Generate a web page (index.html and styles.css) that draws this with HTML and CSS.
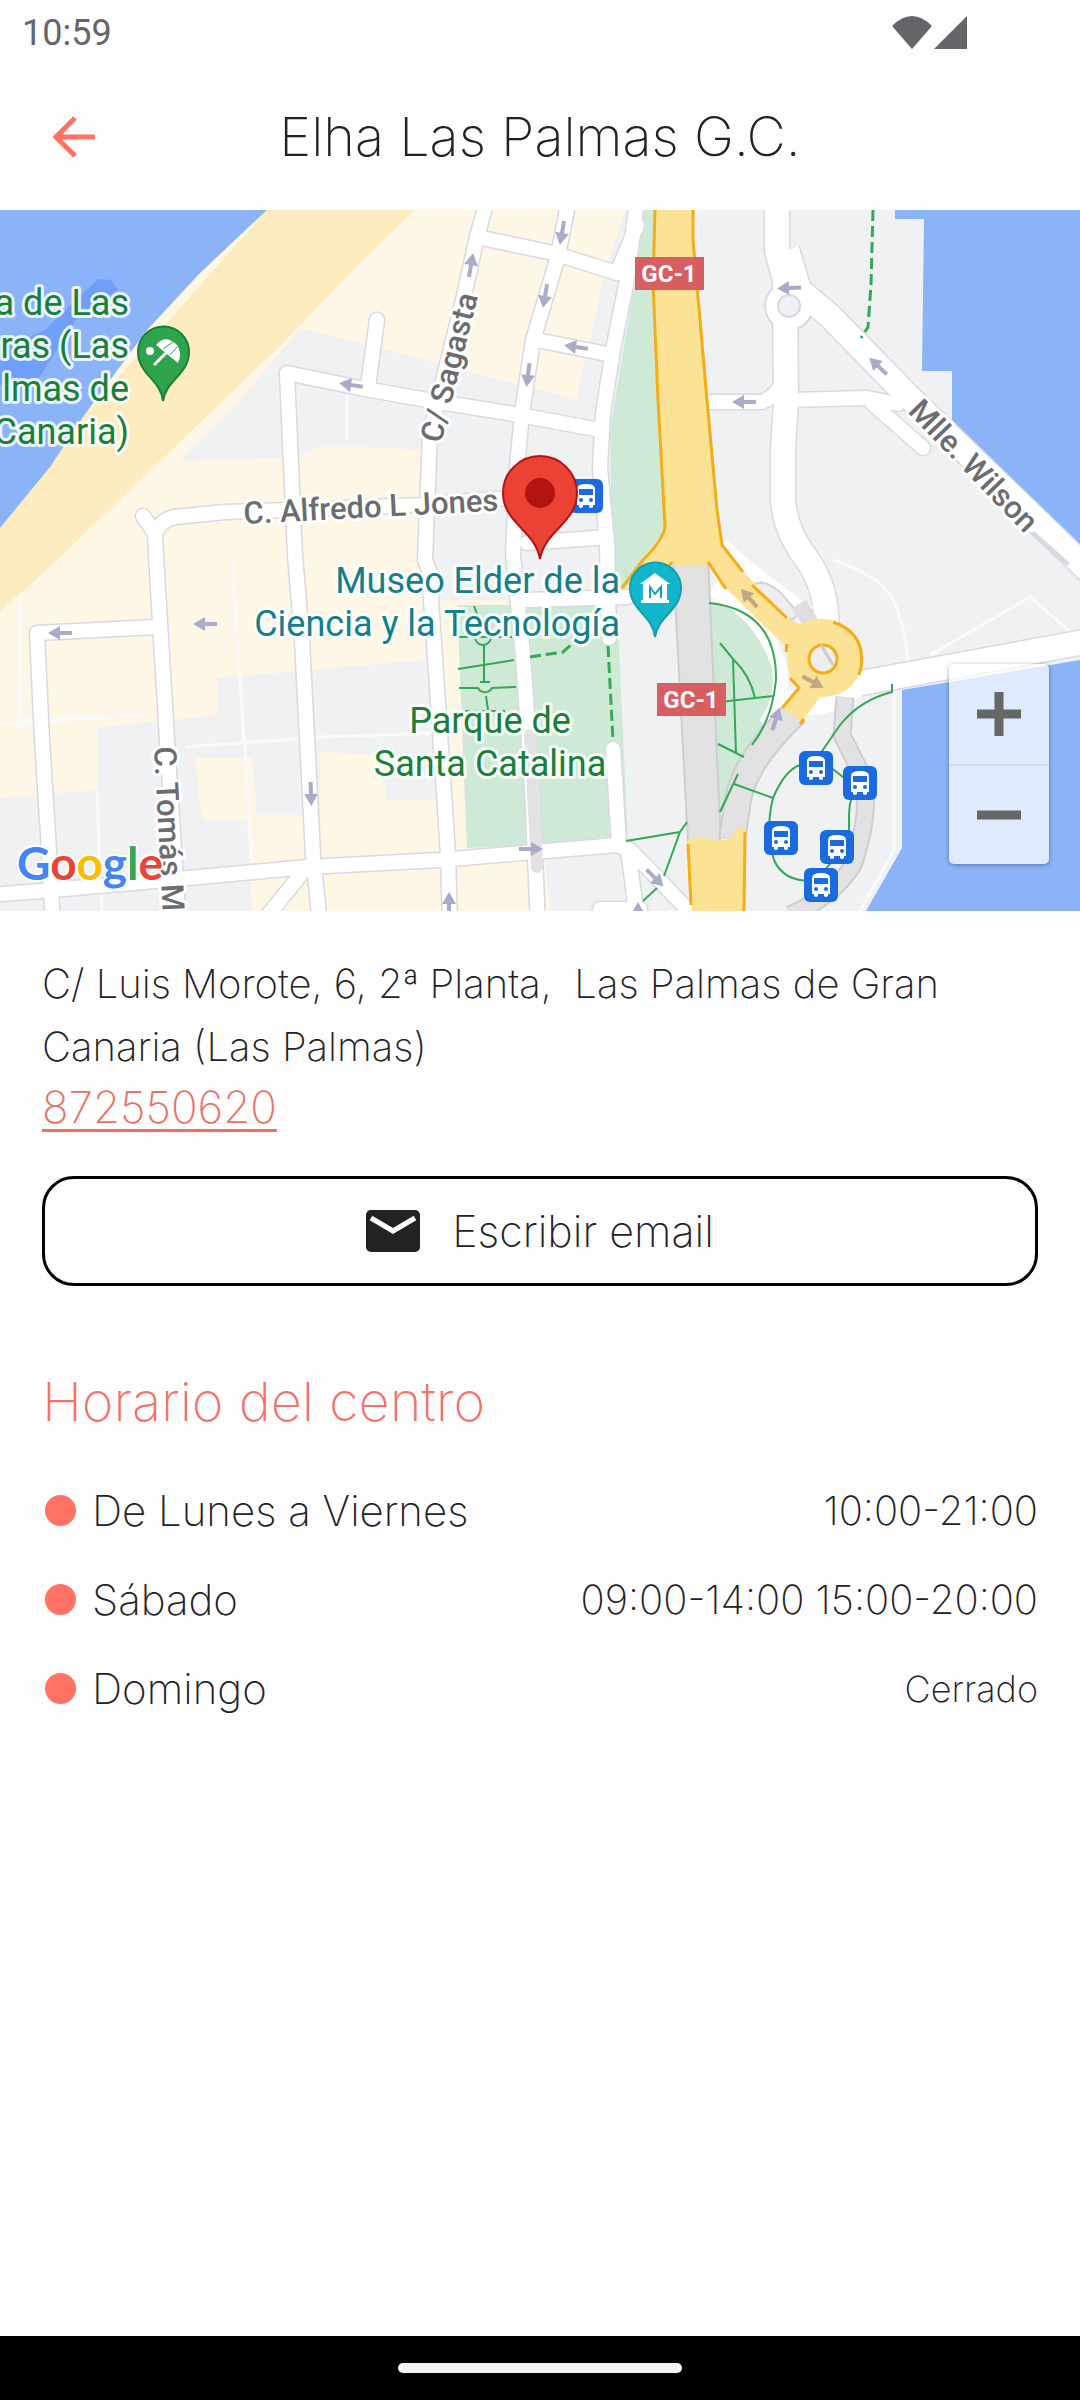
FILE: index.html
```html
<!DOCTYPE html>
<html lang="es">
<head>
<meta charset="utf-8">
<meta name="viewport" content="width=device-width, initial-scale=1">
<title>Elha Las Palmas G.C.</title>
<link rel="stylesheet" href="styles.css">
</head>
<body>
<div class="screen">
  <div class="status">
    <span class="clock">10:59</span>
    <svg class="signals" width="78" height="36" viewBox="0 0 78 36" aria-hidden="true">
      <path d="M0 11Q20 -9 40 11L20 34Z"/>
      <path d="M75 1V34H42Z"/>
    </svg>
  </div>
  <header class="header">
    <button class="back" type="button" aria-label="Volver">
      <svg width="44" height="44" viewBox="0 0 44 44" aria-hidden="true"><path d="M43 22H4M23 3L4 22L23 41"/></svg>
    </button>
    <h1 class="title">Elha Las Palmas G.C.</h1>
  </header>

  <section class="map" aria-label="Mapa">
    <svg class="map-canvas" viewBox="0 210 1080 701">
      <defs>
        <g id="arrow"><path d="M-12 0H4" fill="none" stroke="#a9acc9" stroke-width="4"/><path d="M0 -7L12 0L0 7Z" fill="#a9acc9"/></g>
        <g id="bus">
          <rect x="-17" y="-17" width="34" height="34" rx="6" fill="#1a6ae0"/>
          <path d="M-9 9V-7Q-9 -12 0 -12T9 -7V9H7V11Q5 13 3 11V9H-3V11Q-5 13 -7 11V9Z" fill="#fff"/>
          <path d="M-7 -7H7V-1H-7Z" fill="#1a6ae0"/>
          <circle cx="-5" cy="4" r="2" fill="#1a6ae0"/><circle cx="5" cy="4" r="2" fill="#1a6ae0"/>
        </g>
        <g id="roads" fill="none" stroke-linejoin="round" stroke-linecap="round">
          <path d="M143 516L154 532M155 533Q162 519 175 517L225 512L290 510L420 505L520 497"/>
          <path d="M155 530L156 555L160 622L167 740L178 911"/>
          <path d="M155 627L37 633L42 740L49 850L53 925"/>
          <path d="M320 925L313 855L302 640L295 555L287 373L360 388L427 400L520 415L600 430"/>
          <path d="M377 320L368 387"/>
          <path d="M487 200L477 237L463 300L430 433L425 560L429 570L438 702L448 855L450 925"/>
          <path d="M569 200L557 260L533 340L522 413L517 467L513 555L523 655L532 788L538 925"/>
          <path d="M477 237L553 253L617 273L637 225M537 340L612 355M527 543L607 537M527 600L627 597"/>
          <path d="M637 200L627 280L613 350L603 413L600 467L607 545L609 638"/>
          <path d="M613 749L619 843"/>
          <path d="M-10 895L53 890L200 877L307 867L440 860L617 845L630 850L667 888L697 920M628 850L638 925M307 867L260 925M600 909H640"/>
          <path d="M700 402H762Q775 397 785 380M790 400L867 398L898 404M872 403L923 448"/>
        </g>
        <g id="wide-roads" fill="none" stroke-linejoin="round">
          <path d="M777 200V250L785 280L786 400L783 450V500Q785 530 806 558Q830 590 826 640"/>
          <path d="M787 250L799 290L830 316L907 395L1095 577"/>
          <path d="M845 686L1095 640"/>
        </g>
      </defs>

      <rect y="210" width="1080" height="701" fill="#fef7e6"/>
      <path fill="#f0f1f3" d="M300 328L437 363L513 383L576 400L590 340L603 280L625 210H1080V911H620L550 911L545 860L610 840L600 600L425 600L440 800L385 800V755L320 752V815H257L252 758H195L202 820H247L252 911H0V798L97 790V728L217 715V678L425 660V450L360 447L320 447L293 458L180 461L240 400Z"/>
      <path fill="#fef7e6" d="M488 232L545 248L515 383L450 366ZM425 450H360V652L372 648V560H425Z"/>
      <path fill="#fef7e6" d="M449 868L525 862L530 911H451ZM450 805H460L466 848H452Z"/>
      <g class="lanes"><path d="M20 555V720L100 715M97 790L102 911M0 725L150 715M232 555L252 860M186 747L320 737L435 733M347 380V440"/></g>
      <path fill="#fdecc0" d="M267 210H415L360 263L283 343L133 487L57 560L0 612V528L83 417Z"/>
      <path fill="#8bb3f8" d="M0 210H267L200 273L147 330L83 417L50 467L0 528Z"/>
      <path fill="#6f9ff6" d="M98 279L111 280L118 290L75 320L40 377L0 385V350L45 330Z"/>
      <path fill="#8bb3f8" d="M895 210V219H924L922 371H952V420L1080 553V210Z"/>
      <path fill="#8bb3f8" d="M1080 660L902 690V848L866 911H1080Z"/>
      <path fill="#ceead6" d="M643 210H655L653 283L665 530L640 562L620 600L612 560L610 430L620 370L632 300Z"/>
      <path fill="#ceead6" d="M457 605H617L628 842L467 848Z"/>
      <path fill="#ceead6" d="M708 603Q777 610 776 678Q775 720 740 765L720 812Z"/>
      <g class="lanes"><path d="M833 560Q880 575 893 600Q905 625 908 662M930 655L1030 597L1080 640M894 690V850L860 911"/></g>

      <use href="#roads" stroke="#d9d9e0" stroke-width="17"/>
      <use href="#wide-roads" stroke="#d9d9e0" stroke-width="27"/>
      <circle cx="789" cy="306" r="25" fill="#d9d9e0"/>
      <use href="#roads" stroke="#fff" stroke-width="14"/>
      <use href="#wide-roads" stroke="#fff" stroke-width="24"/>
      <circle cx="789" cy="306" r="23" fill="#fff"/>
      <circle cx="789" cy="306" r="11" fill="#f0f1f3" stroke="#d9d9e0" stroke-width="2"/>
      <path fill="#d9d9e0" d="M1030 534L1034 531L1070 563L1066 566Z"/>

      <!-- motorway, tunnel and ramps -->
      <path d="M720 546Q750 575 808 615" fill="none" stroke="#fff" stroke-width="18"/>
      <path d="M712 590Q760 610 779 665Q785 700 765 725" fill="none" stroke="#fff" stroke-width="15"/>
      <path d="M785 700Q820 715 865 680" fill="none" stroke="#fff" stroke-width="22"/>
      <path d="M752 586Q762 577 780 592L798 613Q790 628 775 610Z" fill="#eeeef0" stroke="#d4d4d8" stroke-width="2"/>
      <path d="M799 604L815 630" stroke="#dededf" stroke-width="16"/>
      <path fill="#e2e2e2" stroke="#cecece" stroke-width="2" d="M673 560H708L720 822V842H688Z"/>
      <g fill="none" stroke-linejoin="round">
        <path d="M796 712Q745 760 738 800L732 840" stroke="#cecece" stroke-width="28"/>
        <path d="M796 712Q745 760 738 800L732 840" stroke="#e2e2e2" stroke-width="24"/>
        <path d="M845 697L842 735L862 775Q872 810 853 865Q835 895 790 915" stroke="#cecece" stroke-width="19"/>
        <path d="M845 697L842 735L862 775Q872 810 853 865Q835 895 790 915" stroke="#e2e2e2" stroke-width="15"/>
        <path d="M530 735L537 867" stroke="#e2e2e2" stroke-width="12" stroke-linecap="round"/>
      </g>
      <path fill="#fce294" d="M655 210H693V240L707 400L717 510L722 545L740 568L787 618L800 625Q815 615 835 621Q866 633 861 668Q853 697 820 697L802 722L782 708L798 688Q785 672 787 648L758 620L726 588L708 565H672L640 575L625 590L643 560L662 541L665 527L658 400L653 283Z"/>
      <path fill="#fce294" d="M688 840Q700 835 712 840H730Q740 820 746 832L744 911H692Z"/>
      <g fill="none" stroke="#f5ad17" stroke-width="3">
        <path d="M655 210L653 283L658 400L665 527Q663 540 643 560L622 588M693 210V240L707 400L717 510L722 545L743 572M672 562L652 590M752 585L787 618M708 562L726 589M833 622Q866 633 861 668L859 675M787 644L786 652M790 678L799 688L782 708M804 719L800 724M688 844L691 905M745 832L744 911"/>
        <circle cx="823" cy="659" r="14" fill="#eee"/>
      </g>
      <path d="M821 645L833 665" stroke="#ccc" stroke-width="3"/>

      <g fill="none" stroke="#34a853" stroke-width="2">
        <path d="M474 606L480 622M459 637H512M475 637A8 8 0 0 0 491 637M484 645V682M458 669L514 660M480 682H490M459 688H478A8 8 0 0 0 492 688L516 687M486 696L488 710M465 711H505"/>
        <path d="M709 603Q777 610 776 680Q772 720 752 745M720 643L733 659Q750 675 755 698M733 659L736 754M720 702L774 696M718 744L744 757M738 774L720 812M734 784L773 798M773 798Q785 770 800 765L816 760L840 725Q860 700 892 692V684M773 798Q765 830 774 860Q785 885 821 880M830 767L860 790Q850 790 849 815V840L821 875"/>
        <path d="M626 841L680 832M687 822L680 832L664 876M657 888L643 901"/>
      </g>
      <g fill="none" stroke="#34a853" stroke-width="3" stroke-dasharray="11 5">
        <path d="M873 210L871 285L868 327L861 338"/>
        <path d="M608 646L613 741M530 657L563 652L575 641"/>
      </g>

      <use href="#arrow" transform="translate(562 233) rotate(100)"/>
      <use href="#arrow" transform="translate(471 265) rotate(-80)"/>
      <use href="#arrow" transform="translate(545 296) rotate(100)"/>
      <use href="#arrow" transform="translate(528 375) rotate(97)"/>
      <use href="#arrow" transform="translate(576 347) rotate(188)"/>
      <use href="#arrow" transform="translate(351 385) rotate(188)"/>
      <use href="#arrow" transform="translate(789 288) rotate(178)"/>
      <use href="#arrow" transform="translate(878 366) rotate(-137)"/>
      <use href="#arrow" transform="translate(744 402) rotate(180)"/>
      <use href="#arrow" transform="translate(60 633) rotate(180)"/>
      <use href="#arrow" transform="translate(205 624) rotate(180)"/>
      <use href="#arrow" transform="translate(311 794) rotate(88)"/>
      <use href="#arrow" transform="translate(449 904) rotate(-90)"/>
      <use href="#arrow" transform="translate(531 849)"/>
      <use href="#arrow" transform="translate(655 878) rotate(45)"/>
      <use href="#arrow" transform="translate(638 914) rotate(-90)"/>
      <use href="#arrow" transform="translate(776 719) rotate(-72)"/>
      <g class="dark-arrows">
        <use href="#arrow" transform="translate(749 598) rotate(-132)"/>
        <use href="#arrow" transform="translate(813 682) rotate(28)"/>
      </g>

      <use href="#bus" x="586" y="496"/>
      <use href="#bus" x="816" y="768"/>
      <use href="#bus" x="860" y="783"/>
      <use href="#bus" x="781" y="838"/>
      <use href="#bus" x="837" y="847"/>
      <use href="#bus" x="821" y="885"/>

      <g class="shield">
        <rect x="635" y="257" width="69" height="33"/><text x="669" y="282">GC-1</text>
        <rect x="657" y="683" width="69" height="33"/><text x="691" y="708">GC-1</text>
      </g>

      <g class="street">
        <text transform="translate(244 524) rotate(-3)">C. Alfredo L Jones</text>
        <text transform="translate(441 444) rotate(-76)">C/ Sagasta</text>
        <text transform="translate(907 412) rotate(46)">Mlle. Wilson</text>
        <text transform="translate(154 747) rotate(87)">C. Tomás M</text>
      </g>
      <g class="place park end">
        <text x="129" y="315">a de Las</text>
        <text x="129" y="358">ras (Las</text>
        <text x="129" y="401">lmas de</text>
        <text x="129" y="444">Canaria)</text>
      </g>
      <g class="place museum end">
        <text x="620" y="593">Museo Elder de la</text>
        <text x="620" y="636">Ciencia y la Tecnología</text>
      </g>
      <g class="place park middle">
        <text x="490" y="733">Parque de</text>
        <text x="490" y="776">Santa Catalina</text>
      </g>

      <g>
        <path d="M163 401C161 380 138 374 138 352A25 25 0 0 1 189 352C189 374 166 380 163 401Z" fill="#2fa44f" stroke="#188038" stroke-width="2"/>
        <circle cx="150" cy="351" r="4" fill="#fff"/>
        <path d="M154 365L170 349" stroke="#fff" stroke-width="3"/>
        <path d="M156 345Q165 334 176 344Q183 352 178 363Z" fill="#fff"/>
        <path d="M163 349L173 342M170 355L177 347" stroke="#2fa44f" stroke-width="1"/>
      </g>
      <g>
        <path d="M655 637C653 616 630 610 630 588A25 25 0 0 1 681 588C681 610 658 616 655 637Z" fill="#12b5cb" stroke="#129eaf" stroke-width="2"/>
        <path d="M641 603V600H643V584H640L655 573L670 584H667V600H669V603Z" fill="#fff"/>
        <path d="M650 598V587L655 594L661 587V598" fill="none" stroke="#12a5b8" stroke-width="2"/>
      </g>
      <path d="M540 559C535 530 503 523 503 493A37 37 0 0 1 577 493C577 523 545 530 540 559Z" fill="#ea4335" stroke="#b31412" stroke-width="2"/>
      <circle cx="540" cy="493" r="15" fill="#b31412"/>

      <text class="logo" x="17" y="880"><tspan fill="#4285f4">G</tspan><tspan fill="#ea4335">o</tspan><tspan fill="#fbbc04">o</tspan><tspan fill="#4285f4">g</tspan><tspan fill="#34a853">l</tspan><tspan fill="#ea4335">e</tspan></text>
    </svg>
    <div class="zoom">
      <button type="button" aria-label="Acercar"><svg width="44" height="44" viewBox="0 0 44 44" aria-hidden="true"><path d="M0 22H44M22 0V44"/></svg></button>
      <button type="button" aria-label="Alejar"><svg width="44" height="44" viewBox="0 0 44 44" aria-hidden="true"><path d="M0 22H44"/></svg></button>
    </div>
  </section>

  <main class="content">
    <p class="address">C/ Luis Morote, 6, 2ª Planta,&nbsp; Las Palmas de Gran Canaria (Las Palmas)</p>
    <a class="phone" href="tel:872550620">872550620</a>
    <button class="email" type="button">
      <svg width="54" height="42" viewBox="0 0 54 42" aria-hidden="true"><rect width="54" height="42" rx="5" fill="#222124"/><path d="M5 8L27 21L49 8" fill="none" stroke="#fff" stroke-width="5"/></svg>
      <span>Escribir email</span>
    </button>
    <h2 class="subtitle">Horario del centro</h2>
    <table class="hours">
      <tr><th scope="row"><span class="day">De Lunes a Viernes</span></th><td class="time">10:00-21:00</td></tr>
      <tr><th scope="row"><span class="day">Sábado</span></th><td class="time">09:00-14:00 15:00-20:00</td></tr>
      <tr><th scope="row"><span class="day">Domingo</span></th><td>Cerrado</td></tr>
    </table>
  </main>
  <div class="navbar"><span class="pill"></span></div>
</div>
</body>
</html>
```
FILE: styles.css
```css
* { box-sizing: border-box; }
body {
  margin: 0;
  background: #fdfdfd;
  color: #222124;
  font-family: Inter, "Liberation Sans", sans-serif;
  font-weight: 200;
}
button { font: inherit; color: inherit; background: none; border: 0; padding: 0; }
.screen { display: flex; flex-direction: column; min-height: 100vh; }

.status {
  display: flex;
  justify-content: space-between;
  align-items: center;
  height: 64px;
  padding: 2px 110px 0 22px;
  color: #676569;
  font: 400 36px/36px Roboto, sans-serif;
}
.signals { fill: #676569; }
.header {
  display: grid;
  grid-template-columns: 64px 1fr 64px;
  align-items: center;
  height: 146px;
  padding: 0 42px;
}
.back { display: flex; align-items: center; height: 64px; padding-left: 10px; }
.back path { fill: none; stroke: #ff7264; stroke-width: 5; }
.title {
  margin: 0;
  text-align: center;
  font-size: 54px;
  line-height: 68px;
  font-weight: 200;
}

.map { position: relative; overflow: hidden; }
.map-canvas { display: block; width: 100%; font-family: Roboto, sans-serif; }
.lanes { fill: none; stroke: #fafafa; stroke-width: 3; }
.dark-arrows { filter: sepia(1) brightness(0.8); }
.shield rect { fill: #d75f62; }
.shield text { fill: #fff; font-size: 24px; font-weight: 700; text-anchor: middle; }
.street text, .place text {
  stroke: #fff;
  stroke-width: 6px;
  stroke-linejoin: round;
  paint-order: stroke;
}
.street text { fill: #6b6c6e; font-size: 31px; font-weight: 500; }
.place text { font-size: 36px; font-weight: 400; stroke-opacity: 0.85; }
.park text { fill: #188038; }
.museum text { fill: #128088; }
.end text { text-anchor: end; }
.middle text { text-anchor: middle; }
.logo {
  font-family: Lato, sans-serif;
  font-size: 46px;
  font-weight: 700;
  stroke: #fff;
  stroke-width: 4px;
  paint-order: stroke;
}
.zoom {
  position: absolute;
  right: 31px;
  bottom: 47px;
  display: flex;
  flex-direction: column;
  width: 100px;
  border-radius: 5px;
  background: rgba(255, 255, 255, 0.72);
  box-shadow: 0 1px 4px rgba(0, 0, 0, 0.35);
}
.zoom button { display: grid; place-items: center; height: 100px; }
.zoom button + button { border-top: 2px solid #cbd8ee; }
.zoom path { stroke: #666; stroke-width: 9; fill: none; }

.content {
  flex: 1;
  display: flex;
  flex-direction: column;
  align-items: flex-start;
  padding: 41px 42px;
}
.address { margin: 0; font-size: 40px; line-height: 63px; }
.phone {
  color: #ea7168;
  font-size: 44px;
  line-height: 58px;
  text-decoration-thickness: 3px;
  text-underline-offset: 6px;
}
.email {
  display: flex;
  justify-content: center;
  align-items: center;
  gap: 32px;
  align-self: stretch;
  height: 110px;
  margin-top: 40px;
  border: 3px solid #000;
  border-radius: 32px;
  font-size: 43px;
}
.subtitle {
  margin: 82px 0 30px;
  color: #f47369;
  font-size: 54px;
  line-height: 68px;
  font-weight: 200;
}
.hours { width: 100%; border-collapse: collapse; }
.hours tr { height: 89px; }
.hours th, .hours td { padding: 0; font-weight: 200; }
.hours th { font-size: 42px; }
.day { display: flex; align-items: center; gap: 16px; }
.day::before {
  content: "";
  width: 31px;
  height: 31px;
  margin-left: 3px;
  border-radius: 50%;
  background: #ff7264;
}
.hours td { text-align: right; font-size: 36px; }
.hours .time { font-size: 40px; }

.navbar { display: grid; place-items: center; height: 64px; background: #000; }
.pill { width: 284px; height: 10px; border-radius: 5px; background: #f4f4f4; }
```
